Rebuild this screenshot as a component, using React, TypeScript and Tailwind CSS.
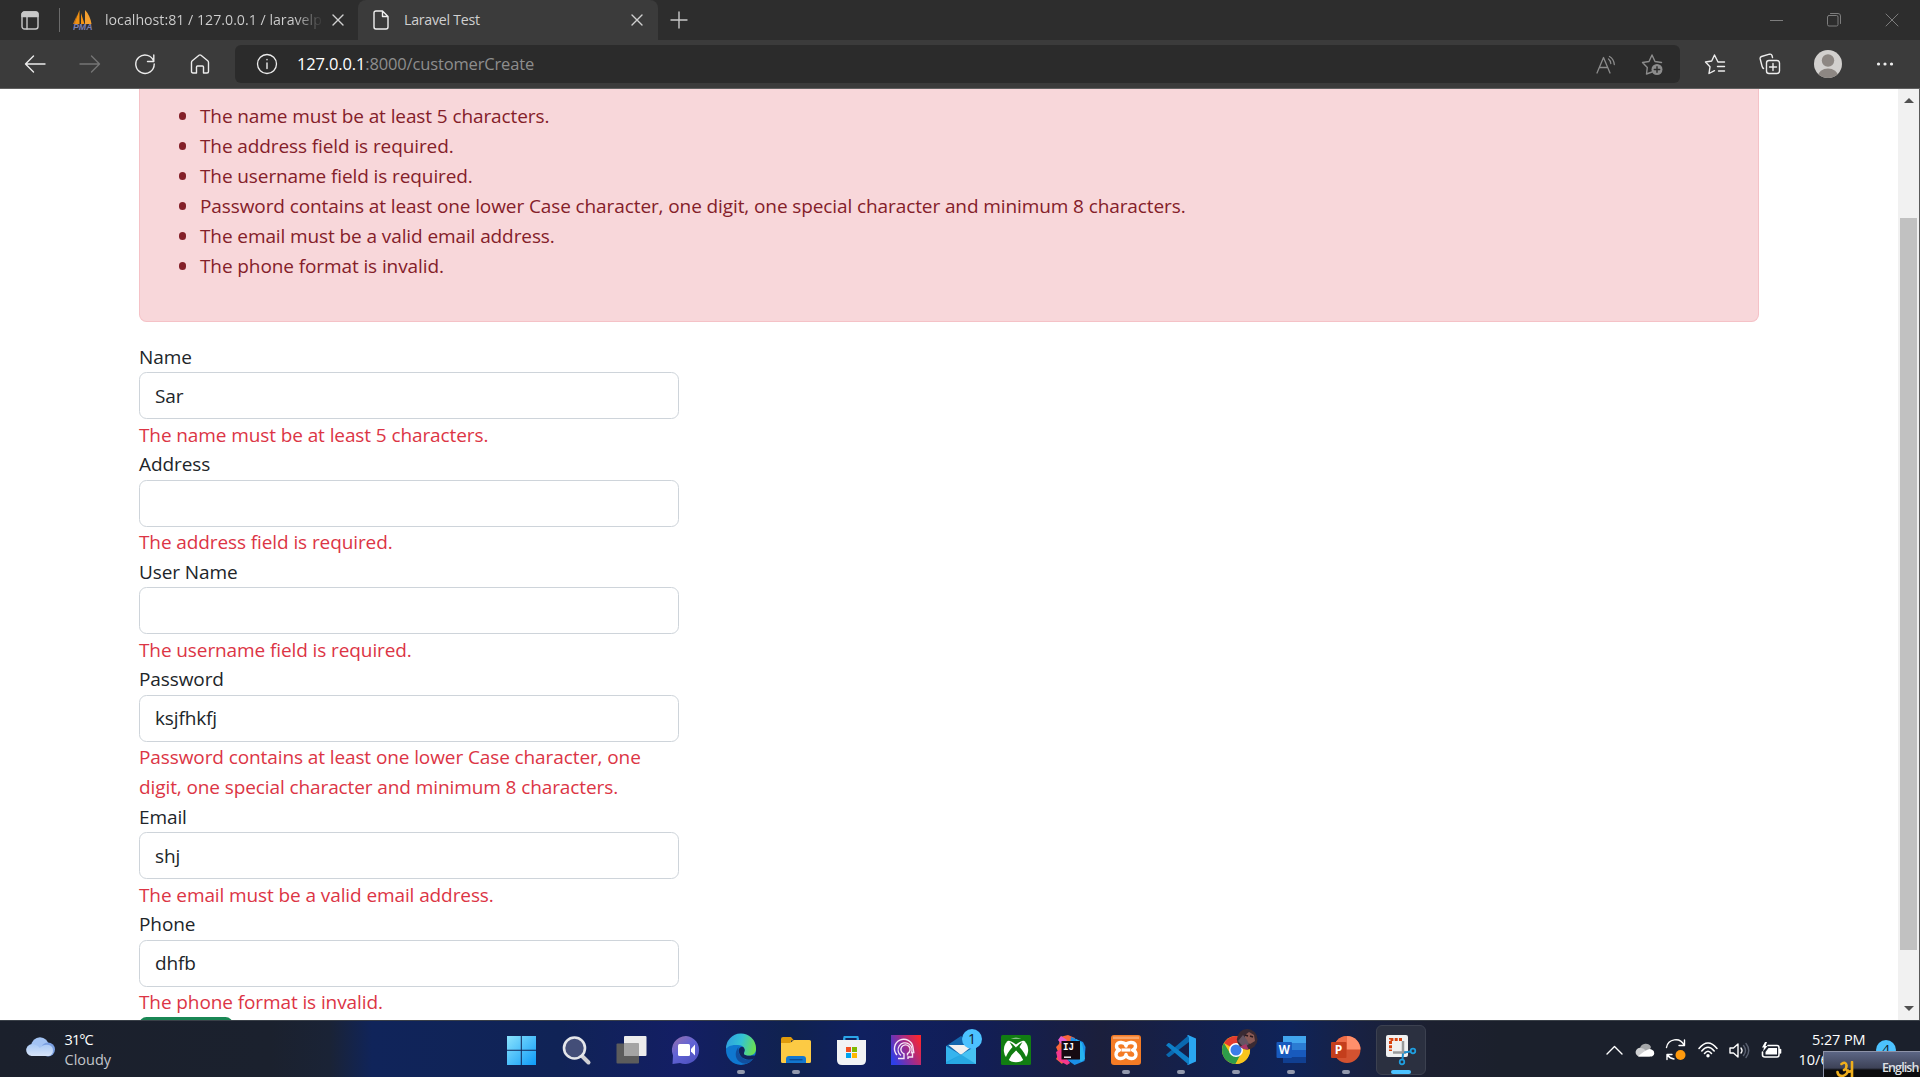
import type { ReactNode } from 'react';

type IconProps = { children: ReactNode; w: number; h: number; className?: string };

function Icon({ children, w, h, className = '' }: IconProps) {
  return (
    <svg width={w} height={h} viewBox={`0 0 ${w} ${h}`} fill="none" stroke="currentColor" strokeWidth="1.4" strokeLinecap="round" strokeLinejoin="round" className={`shrink-0 ${className}`}>
      {children}
    </svg>
  );
}

function CloseIcon({ className = '' }: { className?: string }) {
  return (
    <Icon w={12} h={12} className={className}>
      <path d="M1 1l10 10M11 1L1 11" />
    </Icon>
  );
}

function TabStrip() {
  return (
    <div className="flex h-10 items-center bg-[#2d2d2d] text-[14.2px] text-[#d0d0d0]">
      <Icon w={18} h={19} className="ml-[21px] text-[#c8c8c8]">
        <rect x="1" y="1" width="16" height="17" rx="2.5" />
        <path d="M1 3.5Q1 1 3.5 1H14.5Q17 1 17 3.5V5.500H1Z" fill="currentColor" />
        <path d="M6 6v12" />
      </Icon>
      <div className="ml-[20px] h-6 w-px bg-[#6b6b6b]" />
      <svg width="20" height="21" viewBox="0 0 20 21" className="ml-[13px] shrink-0">
        <path d="M6.500 0L1 14h5.500zM8 3v11h3.500z" fill="#f29111" />
        <path d="M12 0v14h6.500Q17 5 12 0z" fill="#f5a030" />
        <path d="M4 5L0 14h2z" fill="#c9781e" />
        <text x="0" y="20.300" fontSize="8.500" fontWeight="700" fontStyle="italic" fontFamily="Liberation Sans, sans-serif" fill="#7c7fb4" textLength="19.500" lengthAdjust="spacingAndGlyphs">PMA</text>
      </svg>
      <div className="ml-3 w-[216px] overflow-hidden whitespace-nowrap bg-gradient-to-r from-[#d0d0d0] from-88% to-[#3a3a3a] bg-clip-text text-transparent">
        localhost:81 / 127.0.0.1 / laravelp
      </div>
      <CloseIcon className="ml-[11px]" />
      <div className="ml-[14px] flex h-10 w-[300px] items-center rounded-t-lg bg-[#3b3b3b]">
        <Icon w={16} h={20} className="ml-[15px] text-[#f0f0f0]">
          <path d="M9.500 1H3Q1 1 1 3V17Q1 19 3 19H13Q15 19 15 17V6.500ZM9.500 1V6.500H15" />
        </Icon>
        <span className="ml-[15px] tracking-[-0.25px]">Laravel Test</span>
        <CloseIcon className="mr-[15px] ml-auto" />
      </div>
      <Icon w={18} h={18} className="ml-[12px] text-[#c8c8c8]">
        <path d="M9 1v16M1 9h16" />
      </Icon>
      <div className="ml-auto flex items-center gap-[44px] pr-[21px] text-[#7d7d7d]">
        <Icon w={13} h={13}>
          <path d="M0 6.500h13" strokeWidth="1" />
        </Icon>
        <Icon w={14} h={14}>
          <rect x="0.500" y="2.500" width="10.500" height="10.500" rx="1.500" strokeWidth="1" />
          <path d="M3.500 .5H11Q13.500 .5 13.500 3V10.500" strokeWidth="1" />
        </Icon>
        <Icon w={14} h={14}>
          <path d="M1 1l12 12M13 1L1 13" strokeWidth="1" />
        </Icon>
      </div>
    </div>
  );
}

function Toolbar() {
  return (
    <div className="flex h-12 items-center bg-[#3b3b3b] text-[#ececec]">
      <Icon w={22} h={18} className="ml-[24px]">
        <path d="M21 9H1.500M9.500 1L1.500 9l8 8" />
      </Icon>
      <Icon w={22} h={18} className="ml-[33px] text-[#757575]">
        <path d="M1 9h19.500M12.500 1l8 8-8 8" />
      </Icon>
      <Icon w={22} h={22} className="ml-[33px]">
        <path d="M19.800 8.500A9.200 9.200 0 1 0 20.200 11M19.800 2v6.500H13.500" />
      </Icon>
      <Icon w={20} h={20} className="ml-[34px]">
        <path d="M1.500 8.500Q1.500 7.500 2.300 6.800L9 1.300Q10 .5 11 1.300L17.700 6.800Q18.500 7.500 18.500 8.500V17.500Q18.500 19 17 19H13.500V13Q13.500 12 12.500 12H7.500Q6.500 12 6.500 13V19H3Q1.500 19 1.500 17.500Z" />
      </Icon>
      <div className="ml-[25px] flex h-[38px] w-[1445px] items-center rounded-md bg-[#2b2b2b]">
        <Icon w={22} h={22} className="ml-[21px]">
          <circle cx="11" cy="11" r="9.500" strokeWidth="1.300" />
          <path d="M11 10v5.500M11 6.500v.3" />
        </Icon>
        <div className="ml-[19px] text-[16.5px] tracking-[-0.15px] text-[#8e8e8e]">
          <span className="text-white">127.0.0.1</span>:8000/customerCreate
        </div>
        <Icon w={21} h={19} className="ml-auto text-[#8c8c8c]">
          <path d="M1 18L7.500 2.500 14 18M3.300 12.500h8.400M12.500 4Q14.500 5.500 14.800 8.500M13.500 1.500Q17.800 4 18.300 9.500" strokeWidth="1.300" />
        </Icon>
        <Icon w={23} h={23} className="mr-[16px] ml-[24px] text-[#8c8c8c]">
          <path d="M11 19l-5.500 2 .8-6.500L1.500 9.500l6.500-1L11 2l3 6.500 6.500 1" />
          <circle cx="16" cy="16.500" r="5.500" fill="currentColor" stroke="none" />
          <path d="M16 13.800v5.400M13.300 16.500h5.400" stroke="#2b2b2b" />
        </Icon>
      </div>
      <Icon w={22} h={22} className="ml-[24px]">
        <path d="M20.500 9h-6.500L10.500 2 7.700 8 1.500 9l4.500 4.800L5 20.500l5.500-2.800M14 9h6.500M13.500 13.500h7M14.500 18h6" />
      </Icon>
      <Icon w={22} h={22} className="ml-[33px]">
        <rect x="7.500" y="7.500" width="13" height="13" rx="2.500" />
        <path d="M14 10.500v7M10.500 14h7M4.500 15.500Q3.500 15 3 13L1.200 6Q.8 4.200 2.500 3.500L10.500 1.200Q12.500 .8 13 2.500L13.500 4.500" />
      </Icon>
      <svg width="28" height="28" viewBox="0 0 28 28" className="ml-[33px] shrink-0">
        <clipPath id="avatar"><circle cx="14" cy="14" r="14" /></clipPath>
        <g clipPath="url(#avatar)">
          <rect width="28" height="28" fill="#d2d0ce" />
          <circle cx="14" cy="10.500" r="6.200" fill="#8d8783" />
          <ellipse cx="14" cy="26" rx="10" ry="7.500" fill="#8d8783" />
        </g>
      </svg>
      <Icon w={18} h={4} className="ml-[34px]">
        <path d="M2.500 2h.01M9 2h.01M15.500 2h.01" strokeWidth="3.200" />
      </Icon>
    </div>
  );
}

const errors = [
  'The name must be at least 5 characters.',
  'The address field is required.',
  'The username field is required.',
  'Password contains at least one lower Case character, one digit, one special character and minimum 8 characters.',
  'The email must be a valid email address.',
  'The phone format is invalid.',
];

const fields = [
  { label: 'Name', value: 'Sar', error: errors[0] },
  { label: 'Address', value: '', error: errors[1] },
  { label: 'User Name', value: '', error: errors[2] },
  { label: 'Password', value: 'ksjfhkfj', error: errors[3] },
  { label: 'Email', value: 'shj', error: errors[4] },
  { label: 'Phone', value: 'dhfb', error: errors[5] },
];

function Page() {
  return (
    <div className="flex h-[932px] overflow-hidden border-t border-[#606060] bg-white">
      <main className="min-w-0 flex-1 pl-[139px] text-[19px] leading-[30px] tracking-[-0.1px] text-[#212529]">
        <div className="w-[1620px] rounded-b-[7.5px] border border-t-0 border-[#f5c2c7] bg-[#f8d7da] pt-3 pb-10 pl-[60px] text-[#842029]">
          <ul className="list-none">
            {errors.map((e) => (
              <li key={e} className="flex items-center">
                <span className="mr-[14px] -ml-[21.5px] h-[7.500px] w-[7.500px] rounded-full bg-[#842029]" />
                {e}
              </li>
            ))}
          </ul>
        </div>
        <form className="mt-5 w-[540px]">
          {fields.map((f) => (
            <div key={f.label}>
              <label className="block pt-[0.6px] leading-[29.4px]">{f.label}</label>
              <input
                readOnly
                value={f.value}
                className="block h-[47.4px] w-full rounded-[7.5px] border border-[#ced4da] bg-white px-[15px] tracking-[-0.15px] outline-none"
              />
              <p className="pt-[0.5px] leading-[30px] text-[#dc3545] -mb-[0.4px]">{f.error}</p>
            </div>
          ))}
          <button type="button" aria-label="Submit" className="block h-[47px] w-[94px] rounded-[7.5px] bg-[#198754]" />
        </form>
      </main>
      <div className="flex w-[21px] flex-col items-center bg-[#f1f1f1] py-[9px]">
        <svg width="10" height="5" viewBox="0 0 10 5"><path d="M5 0l5 5H0z" fill="#505050" /></svg>
        <div className="mt-[115px] h-[732px] w-[17px] bg-[#c1c1c1]" />
        <svg width="10" height="5" viewBox="0 0 10 5" className="mt-auto"><path d="M5 5L0 0h10z" fill="#505050" /></svg>
      </div>
      <div className="w-px bg-[#5a5a5a]" />
    </div>
  );
}

const Svg = ({ children }: { children: ReactNode }) => (
  <svg width="30" height="30" viewBox="0 0 30 30" className="overflow-visible">{children}</svg>
);

const apps: { name: string; running?: boolean; active?: boolean; icon: ReactNode }[] = [
  {
    name: 'Start',
    icon: (
      <Svg>
        <linearGradient id="win" x1="0" y1="0" x2="1" y2="1"><stop offset="0" stopColor="#8be3fd" /><stop offset="1" stopColor="#0d9bf8" /></linearGradient>
        <path d="M1 1h13.800v13.800H1zM15.800 1H30v13.800H15.800zM1 15.800h13.800V30H1zM15.800 15.800H30V30H15.800z" fill="url(#win)" />
      </Svg>
    ),
  },
  {
    name: 'Search',
    icon: (
      <Svg>
        <path d="M21 21l6.500 6.500" stroke="#cfd0d4" strokeWidth="4" strokeLinecap="round" />
        <circle cx="13.500" cy="13" r="10.500" fill="#434e78" stroke="#e4e6ea" strokeWidth="2.600" />
      </Svg>
    ),
  },
  {
    name: 'Task view',
    icon: (
      <Svg>
        <rect x="8" y="1" width="22.500" height="20" rx="1" fill="#ececec" />
        <rect x="0.500" y="8.500" width="22.500" height="20" rx="1" fill="#5c5c5c" />
        <path d="M8 8.500h15V21H8z" fill="#a4a4a4" />
      </Svg>
    ),
  },
  {
    name: 'Chat',
    icon: (
      <Svg>
        <linearGradient id="chat" x1="0" y1="0" x2="0.700" y2="1"><stop offset="0" stopColor="#9a6fa8" /><stop offset="0.500" stopColor="#6264d6" /><stop offset="1" stopColor="#4f52c0" /></linearGradient>
        <path d="M15 1A14 14 0 1 1 9 28L1.500 29 2 20.500A14 14 0 0 1 15 1z" fill="url(#chat)" />
        <rect x="7" y="9" width="12" height="12" rx="1.500" fill="#fff" />
        <path d="M20 14l4-4.500v11L20 16.500z" fill="#fff" />
      </Svg>
    ),
  },
  {
    name: 'Edge',
    running: true,
    icon: (
      <Svg>
        <linearGradient id="edgeTop" x1="0" y1="0.300" x2="1" y2="0.500"><stop offset="0" stopColor="#2f9fe0" /><stop offset="0.500" stopColor="#33c3d4" /><stop offset="1" stopColor="#6be050" /></linearGradient>
        <circle cx="15" cy="15" r="15" fill="#0f78d0" />
        <path d="M12.500 12C7 19 10 28 20 28.800A15 15 0 0 0 27.500 23.500C25 25 21 26 18 24C13 21 12 17 12.500 12z" fill="#114f9e" />
        <path d="M12.700 15C14 9.500 21 12 18.700 16.500C17.500 19.500 19 20.700 24 20.500H30L27.500 23.800C19 27 12.500 21 12.700 15z" fill="#12245c" />
        <path d="M0 14A15 15 0 0 1 30 13C30.500 18 27 20.500 23 20.500C19 20.500 17 19.500 18.500 17C20 13 16 9.500 11 10C5 9.500 1 12 0 14z" fill="url(#edgeTop)" />
      </Svg>
    ),
  },
  {
    name: 'File Explorer',
    running: true,
    icon: (
      <Svg>
        <path d="M0 4Q0 2 2 2h8l3 3.500h-3v3H0z" fill="#e09b0c" />
        <path d="M0 8h9l4-3h15.500Q30 5 30 6.500V26.500Q30 28 28.500 28H1.500Q0 28 0 26.500z" fill="#fcca44" />
        <path d="M5 28V24Q5 21 8 21h14Q25 21 25 24v4z" fill="#1277cf" />
        <path d="M8.500 24.700h13" stroke="#0b4c94" strokeWidth="1.400" />
      </Svg>
    ),
  },
  {
    name: 'Store',
    icon: (
      <Svg>
        <path d="M8.500 7V2h13v5" fill="none" stroke="#2ba5e8" strokeWidth="1.800" />
        <path d="M1 5h29v20q0 5-5 5H6q-5 0-5-5z" fill="#f2f3f5" />
        <path d="M8 5V2.500M22 5V2.500" stroke="#2ba5e8" strokeWidth="1.800" />
        <path d="M10 12h5v5h-5z" fill="#f25022" /><path d="M16 12h5v5h-5z" fill="#7fba00" />
        <path d="M10 18h5v5h-5z" fill="#00a4ef" /><path d="M16 18h5v5h-5z" fill="#ffb900" />
      </Svg>
    ),
  },
  {
    name: 'Assistant',
    icon: (
      <Svg>
        <linearGradient id="head" x1="0" y1="0.700" x2="1" y2="0.200"><stop offset="0" stopColor="#2e3fe6" /><stop offset="0.500" stopColor="#9b2c90" /><stop offset="1" stopColor="#fa2630" /></linearGradient>
        <path d="M0 0h30v30H0z" fill="url(#head)" />
        <path d="M7 23.500H13V18.800A4.600 4.600 0 1 1 16.500 18.600V20.500M6 20A9.300 9.300 0 1 1 22 12.500L22.800 17.500H21.500V22H17V24" fill="none" stroke="#f5e6f5" strokeWidth="1.400" />
        <path d="M10 20.500A7 7 0 1 1 20 18.500" fill="none" stroke="#f5e6f5" strokeWidth="1.200" />
      </Svg>
    ),
  },
  {
    name: 'Mail',
    icon: (
      <Svg>
        <path d="M0 11L15 1l15 10v8H0z" fill="#1266ae" />
        <path d="M2.500 10h25L15 20z" fill="#f0f0f0" />
        <path d="M0 11l15 9 15-9v18H0z" fill="#35b4ee" />
        <path d="M0 29L15 19.500 30 11v18z" fill="#56cdf8" opacity=".55" />
        <path d="M15 19.500L30 29H0V27z" fill="#199ada" opacity=".65" />
        <circle cx="26" cy="4" r="10" fill="#4cc2ff" />
        <text x="26" y="9" textAnchor="middle" fontSize="14" fontFamily="Open Sans, sans-serif" fill="#10202c">1</text>
      </Svg>
    ),
  },
  {
    name: 'Xbox',
    icon: (
      <Svg>
        <rect width="30" height="30" rx="1.500" fill="#117d12" />
        <circle cx="15" cy="15" r="12.200" fill="#fff" />
        <path d="M6 5.500Q10 5.500 15 9.500Q20 5.500 24 5.500L22 3.500H8z" fill="#117d12" />
        <path d="M8.500 7Q12.500 9 15 12.500Q17.500 9 21.500 7L18.500 12Q24 18 25.500 23.500L22.500 25.500Q20 19.500 15 15.500Q10 19.500 7.500 25.500L4.500 23.500Q6 18 11.500 12z" fill="#117d12" />
      </Svg>
    ),
  },
  {
    name: 'IntelliJ IDEA',
    icon: (
      <Svg>
        <path d="M4 2l8-2 7 3-1 9L6 29 0 24l3-5-3-7 3-3z" fill="#f9663a" />
        <path d="M0 17l5-3 9 14-3 2-9-5z" fill="#f5388c" />
        <path d="M2 5l3-4 6 4-4 6z" fill="#e65bd0" />
        <path d="M15 2l5 2 7 3 2.500 5-1 14-10 4-7-5z" fill="#1a8fe8" />
        <path d="M20 4l6 4 3 16-4 3-4-5z" fill="#27b4f0" />
        <path d="M5.500 6H24v18.500H5.500z" fill="#160a12" />
        <path d="M8 22.200h7" stroke="#fff" strokeWidth="1.400" />
        <text x="7" y="15.300" fontSize="10.500" fontWeight="700" fontFamily="Liberation Mono, monospace" fill="#fff" textLength="11" lengthAdjust="spacingAndGlyphs">IJ</text>
      </Svg>
    ),
  },
  {
    name: 'XAMPP',
    running: true,
    icon: (
      <Svg>
        <rect width="30" height="30" rx="3" fill="#f47b25" />
        <path d="M2 1.500h26v2.500H2z" fill="#f9a468" />
        <path d="M15 11C14.500 6.500 5.500 6 5.500 11Q5.500 14 8.500 15Q5 16 5 19.500C5 25 14.500 24.500 15 19.500C15.500 24.500 25 25 25 19.500Q25 16 21.500 15Q24.500 14 24.500 11C24.500 6 15.500 6.500 15 11Z" fill="none" stroke="#fff" strokeWidth="3.400" strokeLinejoin="round" />
        <path d="M10.500 15h9" stroke="#fff" strokeWidth="3.200" />
      </Svg>
    ),
  },
  {
    name: 'Visual Studio Code',
    running: true,
    icon: (
      <Svg>
        <path d="M0 19.800L2.300 22Q3 22.300 3.700 21.800L23 7V0z" fill="#0a69b0" />
        <path d="M22 0l8 3.500v23L22 30 21 29Q23 29 23 27V3Q23 1 21 1z" fill="#2aa6f2" />
        <path d="M0 10.200L2.300 8Q3 7.700 3.700 8.200L23 23V30z" fill="#0e7fc8" />
      </Svg>
    ),
  },
  {
    name: 'Chrome',
    running: true,
    icon: (
      <Svg>
        <circle cx="15" cy="15" r="14" fill="#f9c51d" />
        <path d="M15 15L2.900 8A14 14 0 0 1 27.100 8z" fill="#e33b2e" />
        <path d="M2.900 8L9.500 19 15 21 12.500 28.800A14 14 0 0 1 2.900 8z" fill="#2e9c4a" />
        <path d="M9.400 18.500L15 21l6-3-6.500 11H14A14 14 0 0 1 9 27z" fill="#2e9c4a" />
        <path d="M20 18.500L14.500 29A14 14 0 0 0 27.100 8H15z" fill="#f9c51d" />
        <circle cx="15" cy="15" r="7" fill="#fff" />
        <circle cx="15" cy="15" r="5.500" fill="#3b7de9" />
        <clipPath id="profile"><circle cx="26.200" cy="4.200" r="10.300" /></clipPath>
        <g clipPath="url(#profile)">
          <path d="M15-7h22v22H15z" fill="#3a2a33" />
          <path d="M24 0l4-3 5 3 1 6-5 3-5-3z" fill="#8a5a55" />
          <path d="M17 6l5-6 4 5 2 4-5 4z" fill="#655563" />
          <path d="M18 12l7-3 3 6-8 1z" fill="#a73767" />
          <path d="M24 0l3 1M29 1l3 1" stroke="#2a1a20" strokeWidth="1.500" />
        </g>
      </Svg>
    ),
  },
  {
    name: 'Word',
    running: true,
    icon: (
      <Svg>
        <path d="M7 1h23v7H7z" fill="#41a5ee" /><path d="M7 8h23v7H7z" fill="#2b7cd3" />
        <path d="M7 15h23v7H7z" fill="#185abd" /><path d="M7 22h23v6H7z" fill="#103f91" />
        <rect x="0.500" y="7" width="15.500" height="16" rx="1" fill="#185abd" />
        <text x="8.200" y="19" textAnchor="middle" fontSize="11.500" fontWeight="700" fontFamily="Open Sans, sans-serif" fill="#fff">W</text>
      </Svg>
    ),
  },
  {
    name: 'PowerPoint',
    running: true,
    icon: (
      <Svg>
        <circle cx="16" cy="14.500" r="13.500" fill="#d35230" />
        <path d="M16 14.500V1A13.500 13.500 0 0 0 2.500 14.500z" fill="#ed6c47" />
        <path d="M16 14.500V1A13.500 13.500 0 0 1 29.500 14.500z" fill="#ff8f6b" />
        <rect x="0" y="7" width="15.500" height="16" rx="1" fill="#c43e1c" />
        <text x="7.500" y="19.200" textAnchor="middle" fontSize="12" fontWeight="700" fontFamily="Open Sans, sans-serif" fill="#fff">P</text>
      </Svg>
    ),
  },
  {
    name: 'Snipping Tool',
    running: true,
    active: true,
    icon: (
      <Svg>
        <rect x="0" y="0" width="22" height="22" rx="2" fill="#f1f1f1" />
        <path d="M16 4.500H4.500V16" fill="none" stroke="#d8420e" strokeWidth="3" strokeDasharray="3 1.300" />
        <path d="M17 6v13M7 17.500h13" stroke="#9a9a9a" strokeWidth="2.500" />
        <path d="M18 17.500l6.500-1M17 18.500l-.5 6" stroke="#1c8fd0" strokeWidth="2" />
        <circle cx="27" cy="16" r="2.300" fill="none" stroke="#1f9fe0" strokeWidth="1.700" />
        <circle cx="16" cy="27" r="2.300" fill="none" stroke="#1f9fe0" strokeWidth="1.700" />
      </Svg>
    ),
  },
];

function Taskbar() {
  return (
    <div className="relative flex h-[57px] overflow-hidden border-t border-[#3a4048] bg-[linear-gradient(90deg,#1b202c_0px,#1b212e_270px,#1a2336_330px,#10245a_372px,#102356_560px,#131e64_680px,#10224f_790px,#102060_860px,#111e58_970px,#1b1f3c_1100px,#14204c_1190px,#0f2358_1290px,#182142_1360px,#1c2030_1430px,#1b202c_1500px)] text-[14.5px] leading-5 text-white">
      <div className="flex w-[493px] items-start pt-[9px] pl-[24.5px]">
        <svg width="30" height="20" viewBox="0 0 30 20" className="mt-[7px]">
          <linearGradient id="cloud" x1="0" y1="0" x2="0" y2="1"><stop offset="0" stopColor="#a9c9f5" /><stop offset="1" stopColor="#d7e4f8" /></linearGradient>
          <circle cx="15" cy="9" r="8.700" fill="#a3c3f3" />
          <circle cx="23" cy="12.500" r="7" fill="#7ba0e2" />
          <path d="M6.500 19A6 6 0 1 1 9.500 7.500Q13 8 15 11Q18 7 24 8A5.800 5.800 0 0 1 24 19z" fill="url(#cloud)" />
        </svg>
        <div className="ml-[10px]">
          <div className="tracking-[-0.9px]">31°C</div>
          <div className="text-[#c3c6cb]">Cloudy</div>
        </div>
      </div>
      <div className="flex">
        {apps.map((a) => (
          <div key={a.name} title={a.name} className="flex w-[55px] justify-center pt-1">
            <div className={a.active ? 'flex h-[50px] w-[50px] flex-col items-center rounded-md border border-[#3c4150] bg-[#2b3040] pt-[9px]' : 'flex h-[50px] w-[50px] flex-col items-center pt-[10px]'}>
              {a.icon}
              {a.running && <div className={a.active ? 'mt-[5px] h-1 w-5 rounded-full bg-[#4cc2ff]' : 'mt-[5px] h-1 w-2 rounded-full bg-[#9299ad]'} />}
            </div>
          </div>
        ))}
      </div>
      <div className="ml-auto flex pr-[24px]">
        <div className="flex items-center gap-[14px] pt-[2px] pr-[30px]">
          <Icon w={17} h={10} className="mr-[-2px]"><path d="M1 9l7.500-7.500L16 9" /></Icon>
          <svg width="21" height="14" viewBox="0 0 21 14">
            <path d="M5 5A6 6 0 0 1 16 4L13 11H2z" fill="#a5a7aa" />
            <path d="M4 13.500A4.300 4.300 0 1 1 6 5Q9 5 11 8L15 13.500z" fill="#cfd0d2" />
            <path d="M3 13.500Q9 8 13 6.500A4 4 0 0 1 17 6.800A3.600 3.600 0 0 1 17 13.500z" fill="#fff" />
          </svg>
          <Icon w={22} h={22} className="mr-[-3px] ml-[-5px]">
            <path d="M1.500 8.500A9.300 9.300 0 0 1 19 6M19.500 1v5.500H14M2 20.500V15.500H7M2.500 16A9.500 9.500 0 0 0 9 20" />
            <circle cx="15.500" cy="16" r="5" fill="#ff9a0e" stroke="none" />
          </Icon>
          <Icon w={20} h={16}>
            <path d="M1 6.500Q10-4.500 19 6.500M3.800 9Q10 1.500 16.200 9M6.500 11.500Q10 7 13.500 11.500" strokeWidth="1.500" />
            <circle cx="10" cy="13.700" r="1.700" fill="currentColor" stroke="none" />
          </Icon>
          <Icon w={21} h={17} className="mr-[-3px] ml-[-3px]">
            <path d="M1 6h3.500L9 2v13L4.500 11H1z" />
            <path d="M12 6q2 2.500 0 5" />
            <path d="M14.500 3.500q4 5 0 10M17 1.500q5.500 7 0 14" stroke="#5a6070" />
          </Icon>
          <Icon w={21} h={17}>
            <path d="M7 3.500H16Q18 3.500 18 5.500V13Q18 15 16 15H4Q1.500 15 1.500 13V10M19.500 7.500v3.500" strokeWidth="1.600" />
            <path d="M7.500 6H16v6.500H4.500V10z" fill="currentColor" stroke="none" />
            <path d="M4 0L1 5.500h2L2 9.500 6.500 4H4.500L6 0z" fill="currentColor" stroke="none" />
          </Icon>
        </div>
        <div className="w-[54px] pt-[9px]">
          <div className="whitespace-nowrap tracking-[-0.1px]">5:27 PM</div>
          <div className="ml-[-13.5px] whitespace-nowrap">10/6/2022</div>
        </div>
        <div className="mt-[19px] ml-[10px] flex h-5 w-5 items-center justify-center rounded-full bg-[#4cc2ff] text-[14px] text-[#10202c]">4</div>
      </div>
      <div className="absolute top-[30px] left-[1823px] flex h-[27px] w-[97px] items-start border-t border-l border-[#8d93a8] bg-[linear-gradient(180deg,#5c6685_0px,#3d4257_16px,#0c0c0e_18px,#0c0c0e_27px)] text-[12.5px] font-semibold text-[#dfe0e4]">
        <svg width="18" height="20" viewBox="0 0 18 20" className="mt-[9px] ml-[12px] shrink-0" fill="none" stroke="#efae1c" strokeWidth="2.600" strokeLinecap="round">
          <path d="M5.500 3Q10 0 10.500 4.500Q10.500 8 8 9M1.500 11Q2 15 6.500 15Q11 14 12 9.500M11 9.500Q13.500 12 16 9M16 1V20" />
        </svg>
        <span className="mt-[6px] ml-[28px] whitespace-nowrap tracking-[-0.9px]">English</span>
      </div>
    </div>
  );
}

export default function App() {
  return (
    <div className="flex h-[1077px] w-[1920px] flex-col overflow-hidden bg-white font-['Open_Sans','Noto_Sans',sans-serif]">
      <TabStrip />
      <Toolbar />
      <Page />
      <Taskbar />
    </div>
  );
}
